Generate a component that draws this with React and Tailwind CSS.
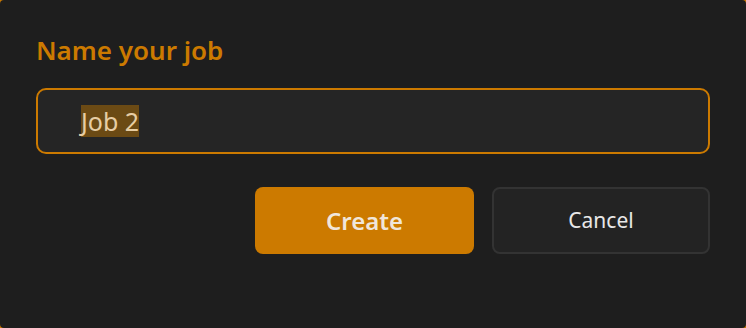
import React from "react";

export default function App() {
  return (
    <div className="w-[746px] h-[328px] bg-[#cc7a00]" style={{ fontFamily: '"Noto Sans", "Open Sans", sans-serif' }}>
      <div className="w-full h-full rounded-[4px] bg-[#1e1e1e] px-9 pt-[33px]">
        <h1 className="text-[26px] leading-[34px] font-semibold text-[#cc7a00]">
          Name your job
        </h1>
        <div className="mt-[21px] h-[66px] rounded-[10px] border-2 border-[#cc7a00] bg-[#252525] flex items-center pl-[43px]">
          <span className="bg-[#6b4a14] text-[#e6cda4] text-[25px] leading-[32px]">Job 2</span>
        </div>
        <div className="mt-[33px] flex justify-end gap-[18px]">
          <button className="w-[219px] h-[67px] rounded-[8px] bg-[#cc7a00] text-[#f0e6da] text-[24px] font-semibold">
            Create
          </button>
          <button className="w-[218px] h-[67px] rounded-[8px] bg-[#232323] border-2 border-[#333333] text-[#e8e8e8] text-[21px]">
            Cancel
          </button>
        </div>
      </div>
    </div>
  );
}
